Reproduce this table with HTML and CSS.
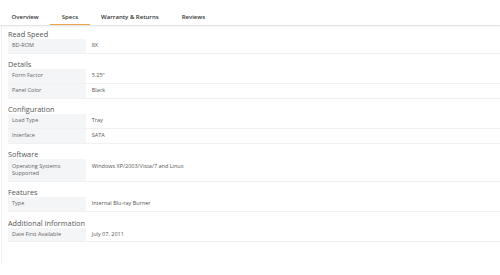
FILE: index.html
```html
<!DOCTYPE html>
<html>
<head>
<meta charset="utf-8">
<link rel="stylesheet" href="styles.css">
</head>
<body>
<nav class="tabs">
  <div class="tab">Overview</div>
  <div class="tab active">Specs</div>
  <div class="tab">Warranty &amp; Returns</div>
  <div class="tab">Reviews</div>
</nav>
<div class="panel">
  <section class="group">
    <div class="heading">Read Speed</div>
    <div class="row"><div class="label">BD-ROM</div><div class="value">8X</div></div>
  </section>
  <section class="group">
    <div class="heading">Details</div>
    <div class="row"><div class="label">Form Factor</div><div class="value">5.25"</div></div>
    <div class="row"><div class="label">Panel Color</div><div class="value">Black</div></div>
  </section>
  <section class="group">
    <div class="heading">Configuration</div>
    <div class="row"><div class="label">Load Type</div><div class="value">Tray</div></div>
    <div class="row"><div class="label">Interface</div><div class="value">SATA</div></div>
  </section>
  <section class="group">
    <div class="heading">Software</div>
    <div class="row"><div class="label">Operating Systems Supported</div><div class="value">Windows XP/2003/Vista/7 and Linux</div></div>
  </section>
  <section class="group">
    <div class="heading">Features</div>
    <div class="row"><div class="label">Type</div><div class="value">Internal Blu-ray Burner</div></div>
  </section>
  <section class="group">
    <div class="heading">Additional Information</div>
    <div class="row"><div class="label">Date First Available</div><div class="value">July 07, 2011</div></div>
  </section>
</div>
</body>
</html>
```
FILE: styles.css
```css
html, body {
  margin: 0;
  padding: 0;
  background: #ffffff;
  font-family: "Open Sans", "Liberation Sans", sans-serif;
}

.tabs {
  display: flex;
  height: 25px;
  border-bottom: 1px solid #e4e4e4;
  box-shadow: 0 1px 2px rgba(0, 0, 0, 0.05);
}

.tab {
  padding: 9px 11.5px 0;
  line-height: 16px;
  font-size: 6px;
  font-weight: 600;
  color: #333;
  box-sizing: border-box;
}

.tab.active {
  border-bottom: 1.5px solid #f0a44a;
}

.panel {
  margin-left: 1px;
  border-left: 1px solid #efefef;
  padding: 0 0 22px 6px;
}

.heading {
  font-size: 7.3px;
  line-height: 10px;
  color: #555;
  padding-top: 5.5px;
}

.group:first-child .heading {
  padding-top: 3px;
}

.row {
  display: grid;
  grid-template-columns: 78px 1fr;
  border-bottom: 1px solid #f1f1f1;
  font-size: 5.5px;
  line-height: 7.6px;
}

.label {
  background: #f4f5f7;
  color: #666;
  padding: 3.1px 4px;
}

.value {
  color: #555;
  padding: 3.1px 5.7px;
}
```
